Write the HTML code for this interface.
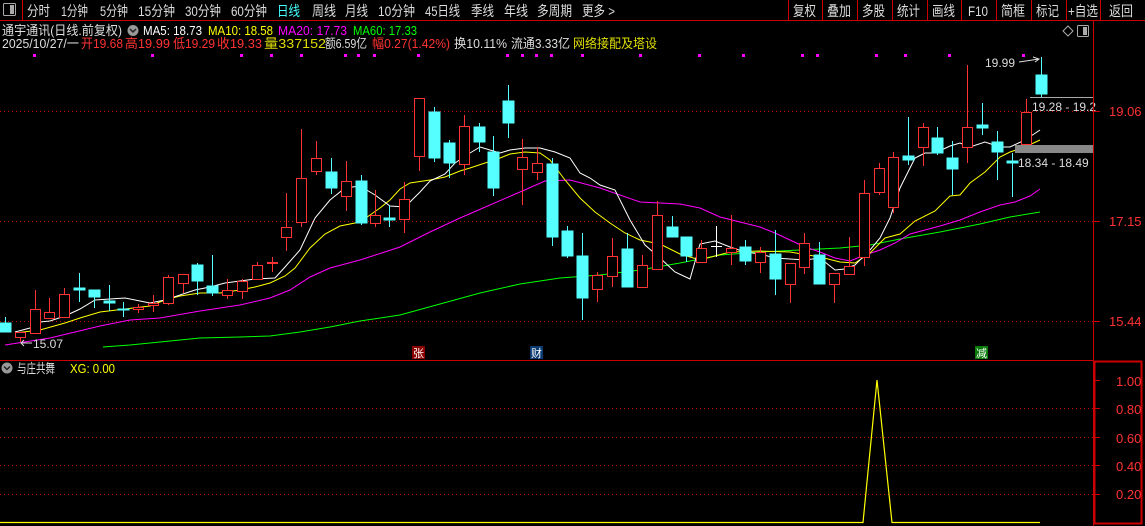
<!DOCTYPE html>
<html><head><meta charset="utf-8"><style>
html,body{margin:0;padding:0;background:#000;width:1145px;height:526px;overflow:hidden}
svg{display:block}
text{font-family:"Liberation Sans","Noto Sans CJK SC",sans-serif}
</style></head><body>
<svg width="1145" height="526" viewBox="0 0 1145 526" xmlns="http://www.w3.org/2000/svg">
<rect width="1145" height="526" fill="#000"/>
<!-- top bar -->
<rect x="3.5" y="3.5" width="12" height="12" fill="none" stroke="#aaa" rx="1"/><rect x="10" y="5" width="4" height="9" fill="#aaa"/>
<line x1="22.5" y1="0" x2="22.5" y2="20" stroke="#c00"/>
<line x1="0" y1="20.5" x2="1145" y2="20.5" stroke="#c00"/>
<g font-size="14" fill="#ddd">
<text x="27" y="16" textLength="23" lengthAdjust="spacingAndGlyphs">分时</text>
<text x="61" y="16" textLength="27" lengthAdjust="spacingAndGlyphs">1分钟</text>
<text x="100" y="16" textLength="28" lengthAdjust="spacingAndGlyphs">5分钟</text>
<text x="138" y="16" textLength="37" lengthAdjust="spacingAndGlyphs">15分钟</text>
<text x="185" y="16" textLength="36" lengthAdjust="spacingAndGlyphs">30分钟</text>
<text x="231" y="16" textLength="36" lengthAdjust="spacingAndGlyphs">60分钟</text>
<text x="277" y="16" fill="#4ff" textLength="23" lengthAdjust="spacingAndGlyphs">日线</text>
<text x="312" y="16" textLength="24" lengthAdjust="spacingAndGlyphs">周线</text>
<text x="345" y="16" textLength="23" lengthAdjust="spacingAndGlyphs">月线</text>
<text x="378" y="16" textLength="37" lengthAdjust="spacingAndGlyphs">10分钟</text>
<text x="425" y="16" textLength="35" lengthAdjust="spacingAndGlyphs">45日线</text>
<text x="471" y="16" textLength="23" lengthAdjust="spacingAndGlyphs">季线</text>
<text x="504" y="16" textLength="24" lengthAdjust="spacingAndGlyphs">年线</text>
<text x="537" y="16" textLength="35" lengthAdjust="spacingAndGlyphs">多周期</text>
<text x="582" y="16" textLength="33" lengthAdjust="spacingAndGlyphs">更多 &gt;</text>
<text x="793" y="16" textLength="23" lengthAdjust="spacingAndGlyphs">复权</text>
<text x="827" y="16" textLength="24" lengthAdjust="spacingAndGlyphs">叠加</text>
<text x="862" y="16" textLength="23" lengthAdjust="spacingAndGlyphs">多股</text>
<text x="897" y="16" textLength="23" lengthAdjust="spacingAndGlyphs">统计</text>
<text x="932" y="16" textLength="23" lengthAdjust="spacingAndGlyphs">画线</text>
<text x="968" y="16" textLength="20" lengthAdjust="spacingAndGlyphs">F10</text>
<text x="1001" y="16" textLength="24" lengthAdjust="spacingAndGlyphs">简框</text>
<text x="1036" y="16" textLength="23" lengthAdjust="spacingAndGlyphs">标记</text>
<text x="1068" y="16" textLength="30" lengthAdjust="spacingAndGlyphs">+自选</text>
<text x="1109" y="16" textLength="24" lengthAdjust="spacingAndGlyphs">返回</text>
</g>
<g stroke="#c00"><line x1="788.5" y1="0" x2="788.5" y2="20"/><line x1="822.5" y1="0" x2="822.5" y2="20"/><line x1="857.5" y1="0" x2="857.5" y2="20"/><line x1="892.5" y1="0" x2="892.5" y2="20"/><line x1="927.5" y1="0" x2="927.5" y2="20"/><line x1="961.5" y1="0" x2="961.5" y2="20"/><line x1="996.5" y1="0" x2="996.5" y2="20"/><line x1="1031.5" y1="0" x2="1031.5" y2="20"/><line x1="1066.5" y1="0" x2="1066.5" y2="20"/><line x1="1100.5" y1="0" x2="1100.5" y2="20"/></g>
<!-- info rows -->
<g font-size="13">
<text x="2" y="35" fill="#ddd" textLength="120" lengthAdjust="spacingAndGlyphs">通宇通讯(日线.前复权)</text>
<circle cx="133" cy="30.5" r="5.5" fill="#999"/><path d="M130 29 L133 32 L136 29" stroke="#222" stroke-width="1.5" fill="none"/>
<text x="143" y="35" fill="#fff" textLength="59" lengthAdjust="spacingAndGlyphs">MA5: 18.73</text>
<text x="208" y="35" fill="#ff0" textLength="65" lengthAdjust="spacingAndGlyphs">MA10: 18.58</text>
<text x="278" y="35" fill="#f0f" textLength="69" lengthAdjust="spacingAndGlyphs">MA20: 17.73</text>
<text x="353" y="35" fill="#0f0" textLength="64" lengthAdjust="spacingAndGlyphs">MA60: 17.33</text>
<text x="2" y="48" fill="#ddd" textLength="77" lengthAdjust="spacingAndGlyphs">2025/10/27/一</text>
<text x="81" y="48" fill="#f33" textLength="42" lengthAdjust="spacingAndGlyphs">开19.68</text>
<text x="125" y="48" fill="#f33" textLength="45" lengthAdjust="spacingAndGlyphs">高19.99</text>
<text x="173" y="48" fill="#f33" textLength="42" lengthAdjust="spacingAndGlyphs">低19.29</text>
<text x="217" y="48" fill="#f33" textLength="45" lengthAdjust="spacingAndGlyphs">收19.33</text>
<text x="264" y="48" fill="#dd0" textLength="62" lengthAdjust="spacingAndGlyphs">量337152</text>
<text x="325" y="48" fill="#ddd" textLength="42" lengthAdjust="spacingAndGlyphs">额6.59亿</text>
<text x="372" y="48" fill="#f33" textLength="78" lengthAdjust="spacingAndGlyphs">幅0.27(1.42%)</text>
<text x="454" y="48" fill="#ddd" textLength="53" lengthAdjust="spacingAndGlyphs">换10.11%</text>
<text x="511" y="48" fill="#ddd" textLength="59" lengthAdjust="spacingAndGlyphs">流通3.33亿</text>
<text x="573" y="48" fill="#dd0" textLength="84" lengthAdjust="spacingAndGlyphs">网络接配及塔设</text>
</g>
<path d="M1063 31 L1068 26 L1073 31 L1068 36 Z" fill="none" stroke="#aaa"/>
<rect x="1077.5" y="25.5" width="11" height="11" fill="none" stroke="#aaa" rx="1"/><rect x="1083" y="27" width="4" height="8" fill="#aaa"/>
<!-- magenta dots -->
<g fill="#f0f">
<rect x="33" y="54" width="3" height="3"/><rect x="151" y="54" width="3" height="3"/><rect x="240" y="54" width="3" height="3"/><rect x="270" y="54" width="3" height="3"/><rect x="300" y="54" width="3" height="3"/><rect x="344" y="54" width="3" height="3"/><rect x="357" y="54" width="3" height="3"/><rect x="373" y="54" width="3" height="3"/><rect x="417" y="54" width="3" height="3"/><rect x="506" y="54" width="3" height="3"/><rect x="521" y="54" width="3" height="3"/><rect x="535" y="54" width="3" height="3"/><rect x="550" y="54" width="3" height="3"/><rect x="581" y="54" width="3" height="3"/><rect x="639" y="54" width="3" height="3"/><rect x="698" y="54" width="3" height="3"/><rect x="742" y="54" width="3" height="3"/><rect x="801" y="54" width="3" height="3"/><rect x="816" y="54" width="3" height="3"/><rect x="875" y="54" width="3" height="3"/><rect x="904" y="54" width="3" height="3"/><rect x="948" y="54" width="3" height="3"/><rect x="1022" y="54" width="3" height="3"/>
</g>
<!-- grid -->
<g stroke="#b00" stroke-dasharray="1,3">
<line x1="0" y1="111.5" x2="1093" y2="111.5"/><line x1="0" y1="221.5" x2="1093" y2="221.5"/><line x1="0" y1="321.5" x2="1093" y2="321.5"/>
<line x1="0" y1="408.5" x2="1093" y2="408.5"/><line x1="0" y1="437.5" x2="1093" y2="437.5"/><line x1="0" y1="465.5" x2="1093" y2="465.5"/><line x1="0" y1="494.5" x2="1093" y2="494.5"/>
</g>
<!-- MA lines -->
<g fill="none" stroke-width="1">
<polyline stroke="#0f0" points="103,347 130,345 160,342 200,338 240,337 270,336 300,332 330,327 360,321 400,315 440,304 480,293 520,284 560,278 600,275 640,270 680,263 720,255 760,252 800,250 840,248 870,245 900,239 940,232 980,224 1010,217 1040,212"/>
<polyline stroke="#f0f" points="5,345 50,338 100,326 130,320 160,318 200,311 240,305 270,298 290,290 310,277 330,268 360,260 400,247 430,232 460,218 490,205 520,192 545,181 570,180 600,188 640,202 680,204 700,208 720,217 740,222 760,227 775,233 790,240 805,247 820,252 835,258 850,261 865,255 880,250 895,243 910,234 925,230 940,226 960,220 980,212 1000,205 1015,202 1030,196 1040,189"/>
<polyline stroke="#ff0" points="15,333 40,330 65,323 80,318 100,312 125,309 150,306 165,300 180,296 200,293 220,293 240,290 255,287 270,283 285,276 295,268 310,248 325,234 340,226 360,222 370,215 380,208 390,200 400,189 410,183 430,180 445,177 460,171 470,168 485,163 495,160 510,154 525,152 540,153 550,160 565,180 580,198 595,212 610,223 625,233 640,240 660,244 680,254 700,260 730,252 760,251 790,252 820,257 840,262 855,263 870,253 885,238 900,234 915,221 935,211 950,196 960,195 970,183 985,172 1000,157 1010,152 1025,147 1040,140"/>
<polyline stroke="#fff" points="15,332 30,328 40,322 50,321 65,316 80,309 95,300 110,299 125,298 140,301 150,303 165,300 180,295 195,290 210,287 225,283 240,281 255,279 275,278 285,267 300,250 315,218 330,200 345,188 360,186 375,195 390,206 405,207 420,192 430,181 445,174 455,163 470,153 480,147 490,150 500,153 510,150 525,148 540,148 555,152 570,158 580,173 590,178 600,185 615,190 630,220 645,245 660,258 675,272 690,279 700,244 715,241 730,247 745,252 760,254 775,258 790,259 805,260 820,258 835,270 845,269 855,265 870,250 880,238 890,218 900,188 915,158 925,153 935,153 950,146 960,143 970,147 985,142 1000,147 1010,147 1025,140 1040,130"/>
</g>
<!-- candles -->
<g stroke-width="1">
<g stroke="#5ff" fill="#5ff">
<line x1="5.5" y1="317" x2="5.5" y2="332"/><rect x="0" y="323" width="11" height="9"/>
<line x1="79.5" y1="273" x2="79.5" y2="302"/><rect x="74" y="288" width="11" height="2"/>
<line x1="94.5" y1="290" x2="94.5" y2="308"/><rect x="89" y="290" width="11" height="7"/>
<line x1="109.5" y1="285" x2="109.5" y2="311"/><rect x="104" y="301" width="11" height="2"/>
<line x1="123.5" y1="302" x2="123.5" y2="317"/><rect x="118" y="309" width="11" height="1"/>
<line x1="197.5" y1="263" x2="197.5" y2="295"/><rect x="192" y="265" width="11" height="16"/>
<line x1="212.5" y1="255" x2="212.5" y2="296"/><rect x="207" y="286" width="11" height="7"/>
<line x1="331.5" y1="158" x2="331.5" y2="194"/><rect x="326" y="172" width="11" height="16"/>
<line x1="361.5" y1="175" x2="361.5" y2="225"/><rect x="356" y="181" width="11" height="42"/>
<line x1="389.5" y1="205" x2="389.5" y2="227"/><rect x="384" y="218" width="11" height="2"/>
<line x1="434.5" y1="107" x2="434.5" y2="162"/><rect x="429" y="112" width="11" height="46"/>
<line x1="449.5" y1="140" x2="449.5" y2="178"/><rect x="444" y="143" width="11" height="20"/>
<line x1="479.5" y1="123" x2="479.5" y2="152"/><rect x="474" y="127" width="11" height="15"/>
<line x1="493.5" y1="136" x2="493.5" y2="196"/><rect x="488" y="152" width="11" height="36"/>
<line x1="508.5" y1="85" x2="508.5" y2="138"/><rect x="503" y="101" width="11" height="22"/>
<line x1="552.5" y1="158" x2="552.5" y2="246"/><rect x="547" y="164" width="11" height="73"/>
<line x1="567.5" y1="226" x2="567.5" y2="258"/><rect x="562" y="231" width="11" height="25"/>
<line x1="582.5" y1="233" x2="582.5" y2="320"/><rect x="577" y="256" width="11" height="42"/>
<line x1="627.5" y1="233" x2="627.5" y2="287"/><rect x="622" y="249" width="11" height="38"/>
<line x1="672.5" y1="216" x2="672.5" y2="237"/><rect x="667" y="227" width="11" height="10"/>
<line x1="686.5" y1="237" x2="686.5" y2="262"/><rect x="681" y="237" width="11" height="19"/>
<line x1="745.5" y1="240" x2="745.5" y2="265"/><rect x="740" y="247" width="11" height="14"/>
<line x1="775.5" y1="230" x2="775.5" y2="295"/><rect x="770" y="254" width="11" height="25"/>
<line x1="819.5" y1="242" x2="819.5" y2="284"/><rect x="814" y="255" width="11" height="29"/>
<line x1="908.5" y1="117" x2="908.5" y2="165"/><rect x="903" y="156" width="11" height="4"/>
<line x1="937.5" y1="127" x2="937.5" y2="155"/><rect x="932" y="138" width="11" height="15"/>
<line x1="952.5" y1="141" x2="952.5" y2="195"/><rect x="947" y="158" width="11" height="11"/>
<line x1="982.5" y1="103" x2="982.5" y2="135"/><rect x="977" y="125" width="11" height="3"/>
<line x1="997.5" y1="131" x2="997.5" y2="180"/><rect x="992" y="142" width="11" height="10"/>
<line x1="1012.5" y1="153" x2="1012.5" y2="197"/><rect x="1007" y="161" width="11" height="2"/>
<line x1="1041.5" y1="57" x2="1041.5" y2="97"/><rect x="1036" y="75" width="11" height="19"/>
</g>
<g stroke="#f33" fill="#000">
<line x1="20.5" y1="332" x2="20.5" y2="342"/><rect x="15.5" y="332.5" width="10" height="5"/>
<line x1="35.5" y1="290" x2="35.5" y2="309"/><rect x="30.5" y="309.5" width="10" height="24"/>
<line x1="49.5" y1="298" x2="49.5" y2="312"/><rect x="44.5" y="312.5" width="10" height="6"/>
<line x1="64.5" y1="288" x2="64.5" y2="294"/><rect x="59.5" y="294.5" width="10" height="23"/>
<line x1="138.5" y1="304" x2="138.5" y2="313"/><rect x="133.5" y="307.5" width="10" height="2"/>
<line x1="153.5" y1="295" x2="153.5" y2="312"/><rect x="148.5" y="303.5" width="10" height="2"/>
<line x1="168.5" y1="275" x2="168.5" y2="305"/><rect x="163.5" y="277.5" width="10" height="26"/>
<line x1="183.5" y1="283" x2="183.5" y2="293"/><rect x="178.5" y="274.5" width="10" height="9"/>
<line x1="227.5" y1="279" x2="227.5" y2="299"/><rect x="222.5" y="290.5" width="10" height="5"/>
<line x1="242.5" y1="279" x2="242.5" y2="299"/><rect x="237.5" y="281.5" width="10" height="10"/>
<line x1="257.5" y1="262" x2="257.5" y2="279"/><rect x="252.5" y="265.5" width="10" height="14"/>
<line x1="272.5" y1="257" x2="272.5" y2="272"/><rect x="267.5" y="262.5" width="10" height="1"/>
<line x1="286.5" y1="193" x2="286.5" y2="251"/><rect x="281.5" y="227.5" width="10" height="10"/>
<line x1="301.5" y1="129" x2="301.5" y2="227"/><rect x="296.5" y="178.5" width="10" height="44"/>
<line x1="316.5" y1="141" x2="316.5" y2="175"/><rect x="311.5" y="158.5" width="10" height="13"/>
<line x1="346.5" y1="161" x2="346.5" y2="211"/><rect x="341.5" y="181.5" width="10" height="15"/>
<line x1="375.5" y1="190" x2="375.5" y2="227"/><rect x="370.5" y="215.5" width="10" height="8"/>
<line x1="404.5" y1="182" x2="404.5" y2="233"/><rect x="399.5" y="199.5" width="10" height="20"/>
<line x1="419.5" y1="156" x2="419.5" y2="171"/><rect x="414.5" y="98.5" width="10" height="58"/>
<line x1="464.5" y1="115" x2="464.5" y2="175"/><rect x="459.5" y="126.5" width="10" height="38"/>
<line x1="522.5" y1="139" x2="522.5" y2="205"/><rect x="517.5" y="157.5" width="10" height="12"/>
<line x1="537.5" y1="147" x2="537.5" y2="180"/><rect x="532.5" y="163.5" width="10" height="9"/>
<line x1="597.5" y1="272" x2="597.5" y2="302"/><rect x="592.5" y="275.5" width="10" height="14"/>
<line x1="612.5" y1="238" x2="612.5" y2="287"/><rect x="607.5" y="256.5" width="10" height="20"/>
<line x1="642.5" y1="255" x2="642.5" y2="287"/><rect x="637.5" y="265.5" width="10" height="22"/>
<line x1="657.5" y1="201" x2="657.5" y2="269"/><rect x="652.5" y="215.5" width="10" height="54"/>
<line x1="701.5" y1="240" x2="701.5" y2="262"/><rect x="696.5" y="248.5" width="10" height="14"/>
<line x1="731.5" y1="215" x2="731.5" y2="265"/><rect x="726.5" y="248.5" width="10" height="4"/>
<line x1="760.5" y1="247" x2="760.5" y2="273"/><rect x="755.5" y="252.5" width="10" height="10"/>
<line x1="790.5" y1="263" x2="790.5" y2="303"/><rect x="785.5" y="263.5" width="10" height="21"/>
<line x1="804.5" y1="233" x2="804.5" y2="274"/><rect x="799.5" y="243.5" width="10" height="24"/>
<line x1="834.5" y1="273" x2="834.5" y2="303"/><rect x="829.5" y="273.5" width="10" height="11"/>
<line x1="849.5" y1="237" x2="849.5" y2="274"/><rect x="844.5" y="266.5" width="10" height="8"/>
<line x1="864.5" y1="180" x2="864.5" y2="266"/><rect x="859.5" y="193.5" width="10" height="64"/>
<line x1="879.5" y1="163" x2="879.5" y2="195"/><rect x="874.5" y="168.5" width="10" height="24"/>
<line x1="893.5" y1="152" x2="893.5" y2="213"/><rect x="888.5" y="157.5" width="10" height="50"/>
<line x1="923.5" y1="123" x2="923.5" y2="166"/><rect x="918.5" y="127.5" width="10" height="20"/>
<line x1="967.5" y1="65" x2="967.5" y2="163"/><rect x="962.5" y="127.5" width="10" height="20"/>
<line x1="1026.5" y1="99" x2="1026.5" y2="112"/><rect x="1021.5" y="112.5" width="10" height="32"/>
</g>
<g stroke="#fff"><line x1="716.5" y1="226" x2="716.5" y2="257"/><line x1="711" y1="246.5" x2="722" y2="246.5"/></g>
</g>
<!-- annotations -->
<rect x="1015" y="145" width="78" height="8" fill="#888"/>
<line x1="1030" y1="97.5" x2="1093" y2="97.5" stroke="#aaa"/>
<g font-size="12" fill="#ddd">
<text x="985" y="67">19.99</text>
<text x="1032" y="111">19.28 - 19.2</text>
<text x="1018" y="167">18.34 - 18.49</text>
<text x="33" y="348">15.07</text>
</g>
<path d="M1019 62 L1039 59 M1033 57 L1039 59 L1035 62" stroke="#ddd" fill="none"/>
<path d="M21 343 L32 343 M24 340 L21 343 L24 346" stroke="#ddd" fill="none"/>
<!-- badges -->
<rect x="412" y="346" width="13" height="13" fill="#8b0000"/><text x="413" y="357" font-size="11" fill="#fff">张</text>
<rect x="530" y="346" width="13" height="13" fill="#0a3a70"/><text x="531" y="357" font-size="11" fill="#fff">财</text>
<rect x="975" y="346" width="13" height="13" fill="#0a7a0a"/><text x="976" y="357" font-size="11" fill="#fff">减</text>
<!-- right axis -->
<line x1="1093.5" y1="21" x2="1093.5" y2="526" stroke="#c00"/>
<line x1="0" y1="360.5" x2="1093" y2="360.5" stroke="#c00"/>
<rect x="1094.5" y="361.5" width="47" height="162" fill="none" stroke="#c00" stroke-width="2"/>
<g font-size="13" fill="#f33">
<text x="1109" y="116">19.06</text><text x="1109" y="226">17.15</text><text x="1109" y="326">15.44</text>
<text x="1116" y="386">1.00</text><text x="1116" y="414">0.80</text><text x="1116" y="443">0.60</text><text x="1116" y="471">0.40</text><text x="1116" y="499">0.20</text>
</g>
<g stroke="#c00"><line x1="1094" y1="111.5" x2="1100" y2="111.5"/><line x1="1094" y1="221.5" x2="1100" y2="221.5"/><line x1="1094" y1="321.5" x2="1100" y2="321.5"/>
<line x1="1094" y1="380.5" x2="1100" y2="380.5"/><line x1="1094" y1="408.5" x2="1100" y2="408.5"/><line x1="1094" y1="437.5" x2="1100" y2="437.5"/><line x1="1094" y1="465.5" x2="1100" y2="465.5"/><line x1="1094" y1="494.5" x2="1100" y2="494.5"/></g>
<!-- lower panel -->
<circle cx="7" cy="368" r="5.5" fill="#999"/><path d="M4 366.5 L7 369.5 L10 366.5" stroke="#222" stroke-width="1.5" fill="none"/>
<text x="17" y="373" font-size="13" fill="#ddd" textLength="38" lengthAdjust="spacingAndGlyphs">与庄共舞</text>
<text x="70" y="373" font-size="13" fill="#ff0" textLength="45" lengthAdjust="spacingAndGlyphs">XG: 0.00</text>
<polyline points="0,522.5 863,522.5 877,380 892,522.5 1040,522.5" fill="none" stroke="#ff0" stroke-width="1.2"/>
</svg>
</body></html>
